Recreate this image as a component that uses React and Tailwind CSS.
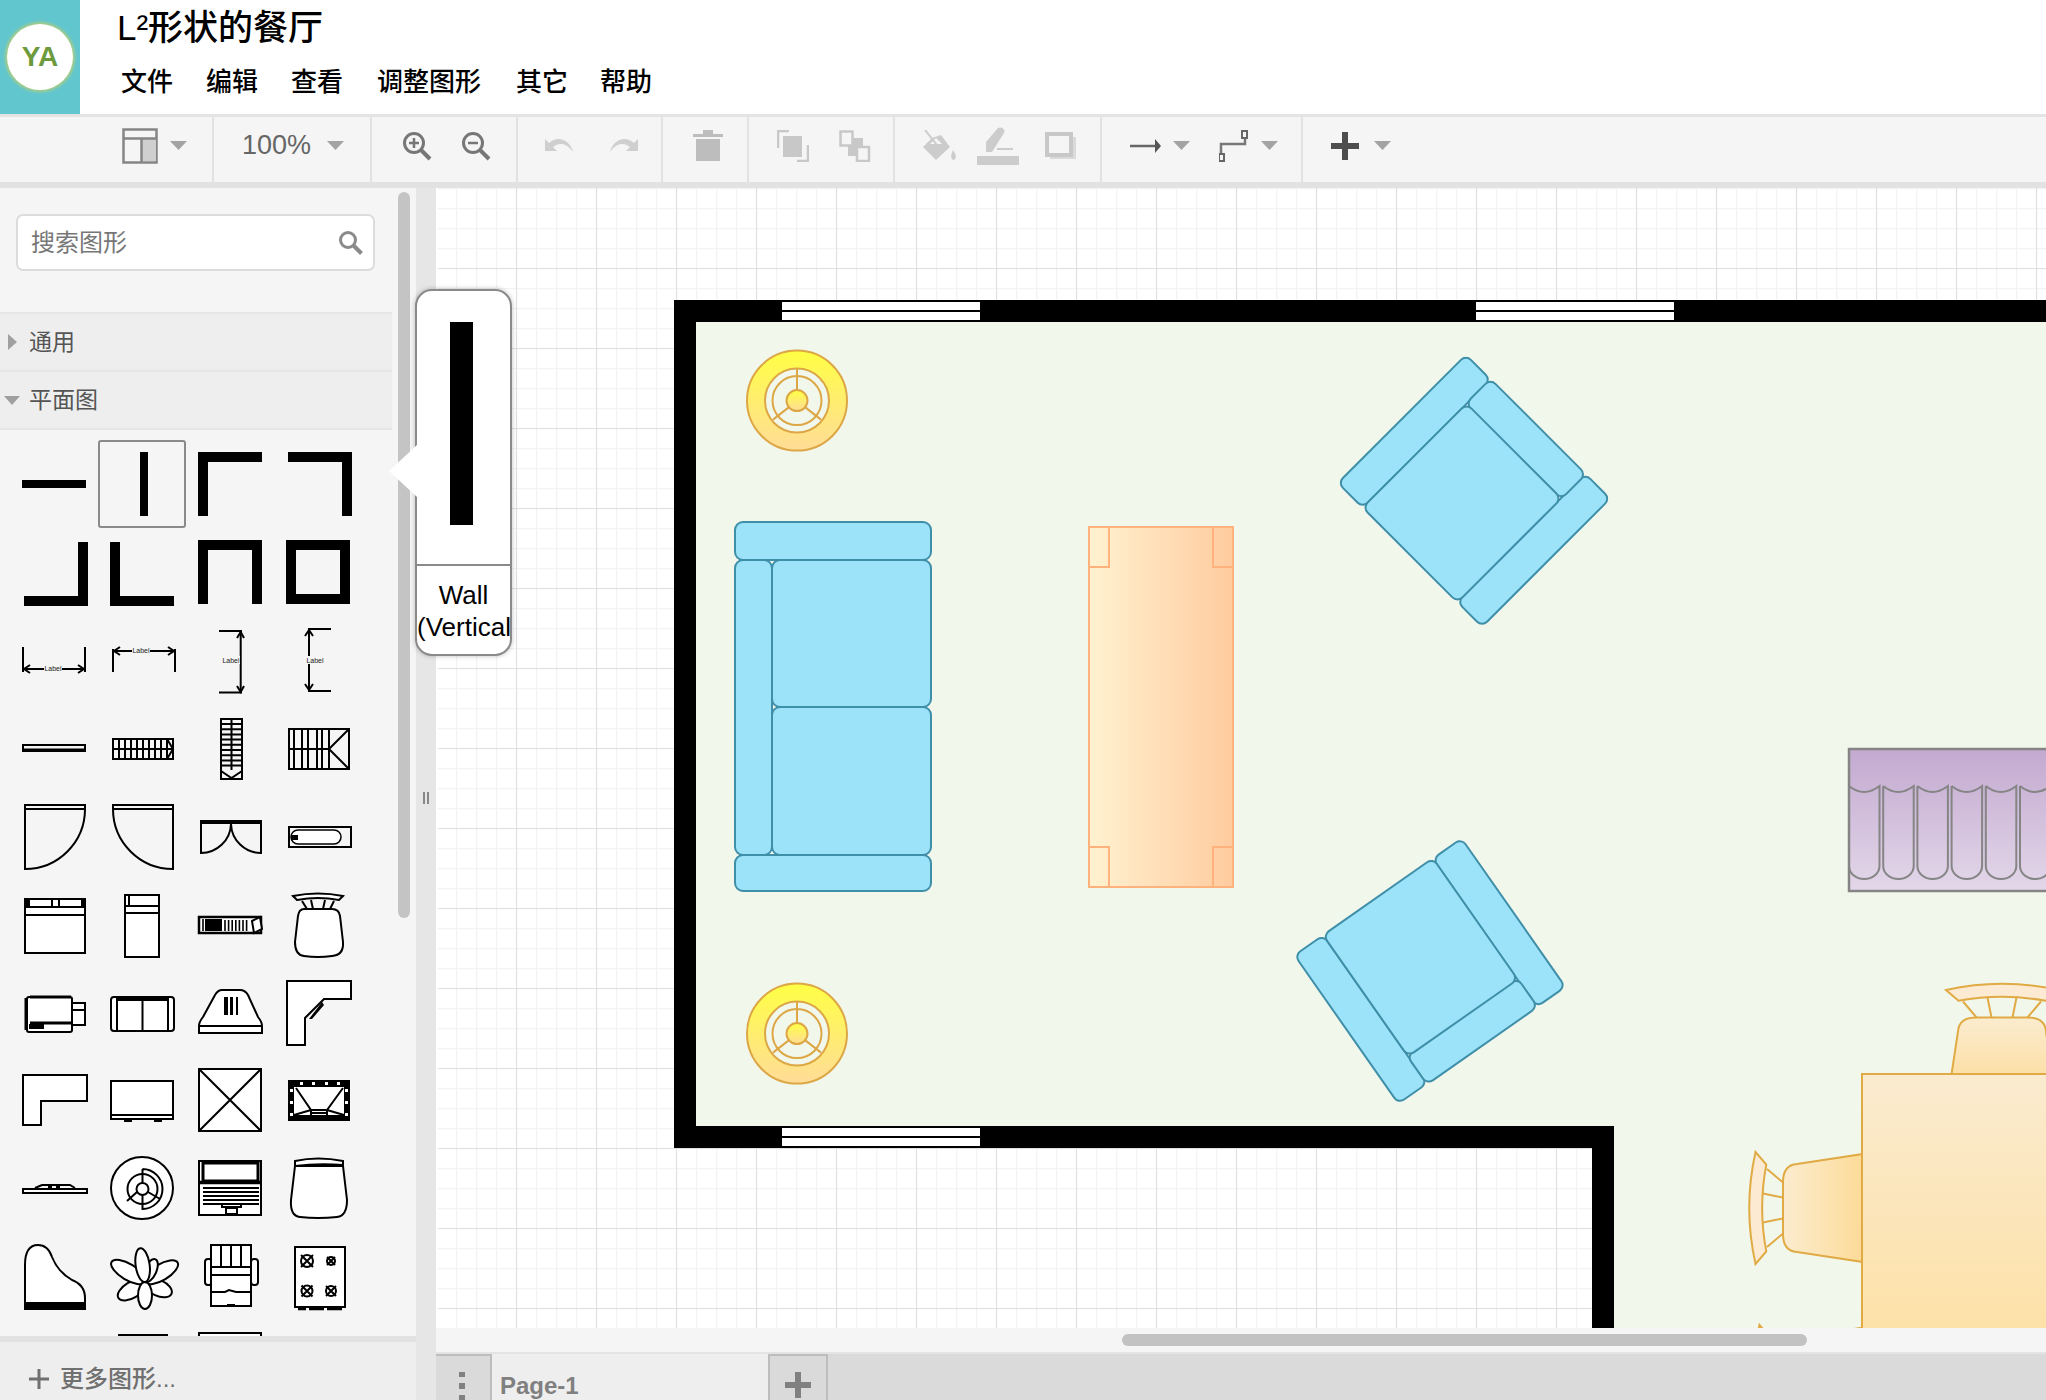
import { Fragment } from 'react';

const MENU = [
  ['文件', 'w-[85px]'],
  ['编辑', 'w-[85px]'],
  ['查看', 'w-[86px]'],
  ['调整图形', 'w-[139px]'],
  ['其它', 'w-[84px]'],
  ['帮助', 'w-[60px]'],
];

function Caret({ className = '' }) {
  return (
    <svg width="17" height="9" viewBox="0 0 17 9" className={`shrink-0 ${className}`}>
      <polygon points="0,0 17,0 8.5,9" fill="#a3a3a3" />
    </svg>
  );
}

function Ico({ w, h, className = '', children }) {
  return (
    <svg width={w} height={h} viewBox={`0 0 ${w} ${h}`} className={`shrink-0 ${className}`}>
      {children}
    </svg>
  );
}

function Toolbar() {
  const group = 'h-full flex items-center pb-[8px] border-r-2 border-[#e2e2e2] shrink-0';
  return (
    <div className="h-[65px] bg-[#f5f5f5] flex shrink-0">
      <div className={`${group} w-[214px]`}>
        <Ico w={36} h={36} className="ml-[122px]">
          <rect x="1.5" y="1.5" width="33" height="33" fill="#f5f5f5" stroke="#858585" strokeWidth="2.5" />
          <rect x="20" y="11" width="14" height="22" fill="#cfcfcf" />
          <path d="M2 10.5H34M19.5 10.5V34" stroke="#858585" strokeWidth="2.5" fill="none" />
        </Ico>
        <Caret className="ml-[12px]" />
      </div>
      <div className={`${group} w-[158px]`}>
        <span className="ml-[28px] text-[27px] leading-none text-[#666] w-[85px]">100%</span>
        <Caret />
      </div>
      <div className={`${group} w-[146px]`}>
        <Ico w={30} h={30} className="ml-[30px]">
          <circle cx="12" cy="12" r="9.5" fill="none" stroke="#777" strokeWidth="3" />
          <path d="M19 19L28 28" stroke="#777" strokeWidth="4" />
          <path d="M12 7V17M7 12H17" stroke="#777" strokeWidth="2.5" />
        </Ico>
        <Ico w={30} h={30} className="ml-[29px]">
          <circle cx="12" cy="12" r="9.5" fill="none" stroke="#777" strokeWidth="3" />
          <path d="M19 19L28 28" stroke="#777" strokeWidth="4" />
          <path d="M7 12H17" stroke="#777" strokeWidth="2.5" />
        </Ico>
      </div>
      <div className={`${group} w-[145px]`}>
        <Ico w={32} h={18} className="ml-[27px]">
          <path d="M0 2V14H12L8 10C14 5 22 6 28 15C26 5 14 -3 4 6Z" fill="#cfcfcf" />
        </Ico>
        <Ico w={32} h={18} className="ml-[29px]">
          <path d="M32 2V14H20L24 10C18 5 10 6 4 15C6 5 18 -3 28 6Z" fill="#cfcfcf" />
        </Ico>
      </div>
      <div className={`${group} w-[86px]`}>
        <Ico w={30} h={31} className="ml-[30px]">
          <path d="M0 4H10V0H20V4H30V7H0ZM3 9H27V31H3Z" fill="#bdbdbd" />
        </Ico>
      </div>
      <div className={`${group} w-[146px]`}>
        <Ico w={32} h={32} className="ml-[28px]">
          <path d="M12 1H1V18M20 31H31V15" fill="none" stroke="#c8c8c8" strokeWidth="2.5" />
          <rect x="6" y="6" width="19" height="21" fill="#c8c8c8" />
        </Ico>
        <Ico w={32} h={32} className="ml-[30px]">
          <rect x="9" y="8" width="15" height="18" fill="#c8c8c8" />
          <rect x="1.5" y="1.5" width="12" height="14" fill="#f5f5f5" stroke="#c8c8c8" strokeWidth="2.5" />
          <rect x="18" y="17" width="12" height="14" fill="#f5f5f5" stroke="#c8c8c8" strokeWidth="2.5" />
        </Ico>
      </div>
      <div className={`${group} w-[207px]`}>
        <Ico w={34} h={32} className="ml-[28px]">
          <path d="M9 8L18 5L27 17L13 30L0 17Z" fill="#cccccc" />
          <path d="M7 14L13 8L19 14Z" fill="#f5f5f5" />
          <path d="M2 0L14 15" stroke="#cccccc" strokeWidth="2" />
          <path d="M30 20C33 25 34 27 31 30C28 30 27 26 30 20Z" fill="#cccccc" />
        </Ico>
        <Ico w={42} h={38} className="ml-[20px]">
          <rect x="0" y="29" width="42" height="9" fill="#cccccc" />
          <path d="M9 25V15L21 1C25 -1 29 3 27 6L15 25Z" fill="#cccccc" />
          <path d="M20 22H36" stroke="#cccccc" strokeWidth="2" />
        </Ico>
        <Ico w={32} h={28} className="ml-[26px]">
          <rect x="5" y="5" width="26" height="22" fill="#dadada" />
          <rect x="2" y="2" width="24" height="21" fill="#f5f5f5" stroke="#c8c8c8" strokeWidth="4" />
        </Ico>
      </div>
      <div className={`${group} w-[201px]`}>
        <Ico w={31} h={16} className="ml-[28px]">
          <path d="M0 8H27" stroke="#666" strokeWidth="2.5" />
          <polygon points="25,1 31,8 25,15" fill="#555" />
        </Ico>
        <Caret className="ml-[12px]" />
        <Ico w={32} h={32} className="ml-[29px]">
          <path d="M2 28V14H26V5" fill="none" stroke="#777" strokeWidth="2.5" />
          <rect x="23" y="1" width="5" height="7" fill="#f5f5f5" stroke="#666" strokeWidth="2" />
          <rect x="0" y="24" width="5" height="7" fill="#f5f5f5" stroke="#666" strokeWidth="2" />
        </Ico>
        <Caret className="ml-[10px]" />
      </div>
      <div className="h-full flex items-center pb-[8px]">
        <Ico w={28} h={28} className="ml-[28px]">
          <path d="M11 0H17V11H28V17H17V28H11V17H0V11H11Z" fill="#4d4d4d" />
        </Ico>
        <Caret className="ml-[15px]" />
      </div>
    </div>
  );
}

const Bk = { fill: 'none', stroke: '#000', strokeWidth: 2 };
const Wh = { fill: '#fff', stroke: '#000', strokeWidth: 2 };

function Label({ x, y }) {
  return (
    <>
      <rect x={x - 9} y={y - 4} width="18" height="8" fill="#f5f5f5" />
      <text x={x} y={y + 2.5} textAnchor="middle" fontSize="7" fill="#222" fontFamily="Liberation Sans">Label</text>
    </>
  );
}

function ArrowHead({ d }) {
  return <path d={d} {...Bk} />;
}

const step = (from, to, by) => {
  const out = [];
  for (let v = from; v <= to; v += by) out.push(v);
  return out;
};

const PETALS = [[114, 29, 8], [-121, 31, 8], [-59, 39, 8], [59, 38, 8], [180, 27, 7], [25, 25, 6], [-8, 34, 7]];

// drawn in page pixels, the cell's viewBox does the offset
const SHAPES = [
  [
    <rect x="22" y="480" width="64" height="8" />,
    <rect x="140" y="452" width="8" height="64" />,
    <path d="M198 452H262V462H208V516H198Z" />,
    <path d="M288 452H352V516H342V462H288Z" />,
  ],
  [
    <path d="M78 542H88V606H24V596H78Z" />,
    <path d="M110 542H120V596H174V606H110Z" />,
    <path d="M198 604V540H262V604H252V550H208V604Z" />,
    <path fillRule="evenodd" d="M286 540H350V604H286ZM296 550V594H340V550Z" />,
  ],
  [
    <>
      <path d="M23 647V672M85 647V672M23 669H85" {...Bk} />
      <ArrowHead d="M30 665L24 669L30 673M78 665L84 669L78 673" />
      <Label x={53} y={668} />
    </>,
    <>
      <path d="M113 649V672M175 649V672M113 651H175" {...Bk} />
      <ArrowHead d="M120 647L114 651L120 655M168 647L174 651L168 655" />
      <Label x={141} y={650} />
    </>,
    <>
      <path d="M219 631H242M219 692.5H242M240.7 631V692" {...Bk} />
      <ArrowHead d="M237 638L240.7 632L244 638M237 686L240.7 692L244 686" />
      <Label x={231} y={660} />
    </>,
    <>
      <path d="M308 629H331M308 691H331M309 629V691" {...Bk} />
      <ArrowHead d="M305 636L309 630L313 636M305 684L309 690L313 684" />
      <Label x={315} y={660} />
    </>,
  ],
  [
    <>
      <rect x="22" y="744" width="64" height="8" />
      <rect x="24" y="746" width="60" height="2.5" fill="#f5f5f5" />
    </>,
    <>
      <rect x="113" y="739" width="60" height="20" {...Bk} />
      <path d={`M113 749H173 ${step(119, 167, 6).map(x => `M${x} 739V759`).join(' ')} M167 739L173 749L167 759`} {...Bk} />
    </>,
    <>
      <rect x="221" y="719" width="21" height="60" {...Bk} />
      <path d={`M231.5 719V770 ${step(724, 770, 5.2).map(y => `M221 ${y}H242`).join(' ')} M221 771L231.5 778L242 771`} {...Bk} />
    </>,
    <>
      <rect x="289" y="729" width="60" height="40" {...Bk} />
      <path d="M289 749H329M294 729V769M302 729V769M308 729V769M317 729V769M322 729V769M329 729V769M329 749L349 729M329 749L349 769" {...Bk} />
    </>,
  ],
  [
    <>
      <path d="M25 805H85V809A60 60 0 0 1 25 869V805ZM25 809H85" {...Bk} />
    </>,
    <>
      <path d="M113 805H173V869A60 60 0 0 1 113 809ZM113 809H173" {...Bk} />
    </>,
    <>
      <rect x="200" y="820" width="62" height="4" />
      <path d="M201 824V853A30 30 0 0 0 231 824A30 30 0 0 0 261 853V824" {...Bk} />
    </>,
    <>
      <rect x="289" y="827" width="62" height="20" {...Bk} />
      <rect x="291" y="830" width="50" height="14" rx="7" fill="#fff" stroke="#000" strokeWidth="1.5" />
      <rect x="291" y="835" width="7" height="5" />
    </>,
  ],
  [
    <>
      <rect x="25" y="899" width="60" height="54" {...Wh} />
      <path d="M29 899V907M52 899V907M59 899V907M82 899V907M25 907H85M25 915H85" {...Bk} />
      <rect x="25" y="899" width="4" height="8" />
      <rect x="82" y="899" width="3" height="8" />
    </>,
    <>
      <rect x="125" y="895" width="34" height="62" {...Wh} />
      <path d="M125 906H159M125 913H159M129 895V906" {...Bk} />
    </>,
    <>
      <rect x="199" y="917" width="62" height="16" fill="#fff" stroke="#000" strokeWidth="2.5" />
      <rect x="205" y="919" width="17" height="12" />
      <path d={`M203 919V931 ${step(225, 250, 3.6).map(x => `M${x} 920V931`).join(' ')}`} stroke="#000" strokeWidth="1.6" fill="none" />
      <path d="M252 921L260 917L262 929L254 933Z" {...Wh} />
    </>,
    <>
      <path d="M302 901L307 909M311 900L313 909M325 900L323 909M334 901L330 909" {...Bk} />
      <path d="M293 896Q318 891 343 896L339 900Q318 896 297 900Z" {...Wh} />
      <path d="M304 909H332Q339 909 340 916L343 942Q344 955 332 956Q318 958 304 956Q295 955 295 942L298 916Q299 909 304 909Z" {...Wh} />
    </>,
  ],
  [
    <>
      <rect x="72" y="1003" width="13" height="22" {...Wh} />
      <path d="M72 1010H85" {...Bk} />
      <rect x="27" y="997" width="45" height="35" rx="2" {...Wh} />
      <path d="M30 997H71M26 998V1030M30 1023H71" stroke="#000" strokeWidth="3" fill="none" />
      <rect x="29" y="1024" width="15" height="5" />
    </>,
    <>
      <rect x="111" y="997" width="63" height="34" rx="3" {...Wh} />
      <path d="M117 997V1031M168 997V1031M142.5 1000V1031" {...Bk} />
      <rect x="117" y="997" width="51" height="4" />
    </>,
    <>
      <path d="M203 1017L215 995Q218 990 222 990H240Q245 990 248 995L258 1017Q262 1022 262 1026V1033H199V1026Q199 1022 203 1017Z" {...Wh} />
      <path d="M199 1026H262" {...Bk} />
      <path d="M224 997H228V1015H224ZM230 997H233V1015H230ZM236 997H238V1015H236Z" />
    </>,
    <>
      <path d="M287 981H351V999H324L305 1018V1045H287Z" {...Wh} />
      <path d="M309 1019L322 1002L324 1005L312 1019Z" />
    </>,
  ],
  [
    <path d="M23 1075H87V1101H41V1125H23Z" {...Wh} />,
    <>
      <rect x="125" y="1116" width="6" height="5" {...Wh} />
      <rect x="155" y="1116" width="6" height="5" {...Wh} />
      <rect x="111" y="1081" width="62" height="38" {...Wh} />
      <path d="M111 1115H173" {...Bk} />
    </>,
    <>
      <rect x="199" y="1069" width="62" height="62" {...Wh} />
      <path d="M199 1069L261 1131M261 1069L199 1131" {...Bk} />
    </>,
    <>
      <rect x="288" y="1080" width="62" height="41" />
      <rect x="294" y="1087" width="50" height="28" fill="#fff" />
      {[300, 312, 325, 337].map(x => <rect key={x} x={x} y="1082" width="3" height="3" fill="#fff" />)}
      {[1089, 1101, 1113].map(y => <Fragment key={y}><rect x="290" y={y} width="3" height="3" fill="#fff" /><rect x="345" y={y} width="3" height="3" fill="#fff" /></Fragment>)}
      <path d="M296 1088L311 1110H327L343 1088M311 1110V1115M327 1110V1115M311 1113H327M294 1115L311 1110M344 1115L327 1110" {...Bk} />
    </>,
  ],
  [
    <>
      <rect x="23" y="1189" width="64" height="4" {...Wh} />
      <path d="M35 1188L42 1185H70L75 1188" {...Bk} />
      <path d="M48 1186H52V1189H48ZM56 1186H60V1189H56Z" />
    </>,
    <>
      <circle cx="142" cy="1188" r="31" {...Wh} />
      <circle cx="142.5" cy="1189" r="15" {...Bk} />
      <circle cx="142.5" cy="1189" r="6" {...Bk} />
      <path d="M142.5 1169A20 20 0 0 1 142.5 1209V1195M142.5 1183V1169M148 1192L160 1199M137 1192L127 1201" {...Bk} />
    </>,
    <>
      <rect x="199" y="1161" width="62" height="54" {...Wh} />
      <rect x="203" y="1163" width="55" height="18" fill="#fff" stroke="#000" strokeWidth="3" />
      <path d="M200 1182.5H262" stroke="#000" strokeWidth="3.5" />
      <path d="M203 1188H259M203 1192H259M203 1196H259M203 1200H259M203 1204H259M222 1204V1207H241V1204" {...Bk} />
      <rect x="226" y="1208" width="11" height="6" {...Wh} />
    </>,
    <>
      <path d="M295 1166L291 1200Q290 1216 300 1217Q318 1219 337 1217Q347 1216 347 1200L343 1166Z" {...Wh} />
      <path d="M295 1161Q318 1156 343 1161V1165Q318 1163 295 1166Z" {...Wh} />
    </>,
  ],
  [
    <>
      <path d="M25 1265Q25 1245 38 1245Q48 1245 52 1257Q58 1272 72 1280Q85 1285 85 1298V1309H25Z" {...Wh} />
      <rect x="25" y="1302" width="60" height="8" />
    </>,
    <>
      {PETALS.map(([a, len, rx]) => (
        <ellipse key={a} cx="0" cy={-len / 2} rx={rx} ry={len / 2} transform={`translate(145 1282) rotate(${a})`} {...Wh} />
      ))}
    </>,
    <>
      <rect x="205" y="1259" width="7" height="26" rx="3" {...Wh} />
      <rect x="251" y="1259" width="7" height="26" rx="3" {...Wh} />
      <rect x="211" y="1245" width="40" height="61" {...Wh} />
      <path d="M221 1245V1267M231 1245V1267M241 1245V1267M211 1267H251M211 1275H251M211 1292L225 1292L229 1290L236 1292H251" {...Bk} />
      <rect x="227" y="1304" width="8" height="3" />
    </>,
    <>
      <rect x="295" y="1247" width="50" height="60" {...Wh} />
      <path d="M298 1309H306M309 1309H324M327 1309H342" stroke="#000" strokeWidth="2.5" />
      {[[307, 1261, 6], [331, 1261, 4], [307, 1291, 5.5], [331, 1291, 5]].map(([x, y, r]) => (
        <Fragment key={`${x}-${y}`}>
          <circle cx={x} cy={y} r={r} {...Bk} />
          <path d={`M${x - r} ${y - r}L${x + r} ${y + r}M${x + r} ${y - r}L${x - r} ${y + r}`} {...Bk} />
        </Fragment>
      ))}
    </>,
  ],
  [
    null,
    <path d="M119 1340V1335H167V1340" {...Bk} />,
    <rect x="199" y="1333" width="62" height="12" {...Wh} />,
    null,
  ],
];

function Palette() {
  return (
    <div className="grid grid-cols-[repeat(4,88px)] auto-rows-[88px] pl-[10px] pt-[10px] shrink-0">
      {SHAPES.map((row, r) =>
        row.map((shape, c) => (
          <div key={`${r}-${c}`} className={r === 0 && c === 1 ? 'rounded-[3px] outline-2 -outline-offset-2 outline-[#8a8a8a]' : ''}>
            <svg width="88" height="88" viewBox={`${10 + 88 * c} ${440 + 88 * r} 88 88`} className="block">
              {shape}
            </svg>
          </div>
        ))
      )}
    </div>
  );
}

function Sidebar() {
  return (
    <div className="w-[416px] flex flex-col shrink-0 bg-[#f5f5f5]">
      <div className="h-[1148px] flex overflow-hidden shrink-0">
        <div className="w-[392px] flex flex-col shrink-0">
          <div className="mt-[26px] ml-[16px] w-[359px] h-[57px] shrink-0 rounded-[7px] border-2 border-[#dcdcdc] bg-white flex items-center justify-between pl-[13px] pr-[10px]">
            <span className="text-[24px] text-[#777] leading-none">搜索图形</span>
            <svg width="25" height="25" viewBox="0 0 25 25">
              <circle cx="10" cy="10" r="7.5" fill="none" stroke="#8a8a8a" strokeWidth="3" />
              <path d="M15.5 15.5L23.5 23.5" stroke="#8a8a8a" strokeWidth="4" />
            </svg>
          </div>
          <div className="mt-[41px] h-[58px] shrink-0 bg-[#eeeeee] border-t-2 border-[#e6e6e6] flex items-center">
            <svg width="9" height="16" viewBox="0 0 9 16" className="ml-[8px]">
              <polygon points="0,0 9,8 0,16" fill="#a0a0a0" />
            </svg>
            <span className="ml-[12px] text-[23px] leading-none text-[#555]">通用</span>
          </div>
          <div className="h-[60px] shrink-0 bg-[#eeeeee] border-y-2 border-[#e6e6e6] flex items-center">
            <svg width="16" height="9" viewBox="0 0 16 9" className="ml-[4px]">
              <polygon points="0,0 16,0 8,9" fill="#a0a0a0" />
            </svg>
            <span className="ml-[9px] text-[23px] leading-none text-[#555]">平面图</span>
          </div>
          <Palette />
        </div>
        <div className="flex-1 pl-[6px] pt-[4px]">
          <div className="w-[12px] h-[726px] rounded-full bg-[#c4c4c4]" />
        </div>
      </div>
      <div className="flex-1 border-t-[6px] border-[#e2e2e2] bg-[#eeeeee] flex items-center pt-[16px]">
        <svg width="20" height="20" viewBox="0 0 20 20" className="ml-[29px]">
          <path d="M10 0V20M0 10H20" stroke="#707070" strokeWidth="3" />
        </svg>
        <span className="ml-[11px] text-[24px] leading-none font-medium text-[#707070]">更多图形...</span>
      </div>
    </div>
  );
}

function Lamp({ cx, cy }) {
  const s = '#dca744';
  return (
    <g transform={`translate(${cx} ${cy})`} fill="none" stroke={s} strokeWidth="2">
      <circle r="50" fill="url(#lamp)" />
      <circle r="32" fill="#f2f7ec" />
      <circle r="24.5" />
      <circle r="10.5" fill="url(#lamp)" />
      <path d="M0 -10.5V-32M-8 6.5L-24 19M8 6.5L24 19" />
    </g>
  );
}

function Cushion({ cx, cy, w, h, a }) {
  return <rect x={-w / 2} y={-h / 2} width={w} height={h} rx="7" transform={`translate(${cx} ${cy}) rotate(${a})`} fill="#9ce2f9" stroke="#3f8fa9" strokeWidth="2" />;
}

function DiningChair({ x, y, a }) {
  return (
    <g transform={`translate(${x} ${y}) rotate(${a})`} stroke="#e0aa44" strokeWidth="2">
      <path d="M-26 0H26Q43 0 44 14L54 80H-54L-44 14Q-43 0 -26 0Z" fill="url(#seat)" />
      <path d="M-39 -16L-25.5 0M-14.5 -20L-10.5 0M14.5 -20L10.5 0M39 -16L25.5 0" fill="none" />
      <path d="M-56 -27.5Q0 -40 56 -27.5L43.5 -16.7Q0 -25 -43.5 -16.7Z" fill="#fcebd2" />
    </g>
  );
}

function FloorPlan() {
  const pillars = [0, 1, 2, 3, 4, 5];
  return (
    <svg width="1610" height="1140" viewBox="436 188 1610 1140" className="block shrink-0">
      <defs>
        <pattern id="minor" x="436" y="188" width="20" height="20" patternUnits="userSpaceOnUse">
          <path d="M0.5 0V20M0 0.5H20" stroke="#f3f3f3" strokeWidth="1.5" fill="none" />
        </pattern>
        <linearGradient id="lamp" x1="0" y1="0" x2="0" y2="1">
          <stop offset="0" stopColor="#ffff44" />
          <stop offset="1" stopColor="#ffdc98" />
        </linearGradient>
        <linearGradient id="tbl" x1="0" y1="0" x2="1" y2="0">
          <stop offset="0" stopColor="#fff2d0" />
          <stop offset="1" stopColor="#ffcb9f" />
        </linearGradient>
        <linearGradient id="cur" x1="0" y1="0" x2="0" y2="1">
          <stop offset="0" stopColor="#c3a9d0" />
          <stop offset="1" stopColor="#e3d7e9" />
        </linearGradient>
        <linearGradient id="seat" x1="0" y1="0" x2="0" y2="1">
          <stop offset="0" stopColor="#fbeccf" />
          <stop offset="1" stopColor="#fddb98" />
        </linearGradient>
        <linearGradient id="dining" x1="0" y1="0" x2="0" y2="1">
          <stop offset="0" stopColor="#faebcf" />
          <stop offset="1" stopColor="#fde0a4" />
        </linearGradient>
      </defs>
      <rect x="436" y="188" width="1610" height="1140" fill="#fff" />
      <rect x="438" y="188" width="1608" height="1140" fill="url(#minor)" />
      <path d={`${step(516, 2046, 80).map(x => `M${x + 0.5} 188V1328`).join(' ')} ${step(268, 1328, 80).map(y => `M438 ${y + 0.5}H2046`).join(' ')}`} stroke="#e0e0e0" strokeWidth="1" fill="none" />

      {/* room */}
      <path d="M696 322H2046V1328H1614V1126H696Z" fill="#f2f7ec" />
      <path d="M674 300H2046V322H696V1126H1614V1328H1592V1148H674Z" fill="#000" />
      {[[782, 302], [1476, 302], [782, 1128]].map(([x, y]) => (
        <Fragment key={`${x}-${y}`}>
          <rect x={x} y={y} width="198" height="8" fill="#fff" />
          <rect x={x} y={y + 10} width="198" height="8" fill="#fff" />
        </Fragment>
      ))}

      <Lamp cx={797} cy={400.6} />
      <Lamp cx={797} cy={1033.6} />

      {/* sofa */}
      <g fill="#9ce2f9" stroke="#3f8fa9" strokeWidth="2">
        <rect x="735" y="560" width="37" height="295" rx="8" />
        <rect x="772" y="560" width="159" height="147" rx="8" />
        <rect x="772" y="707" width="159" height="148" rx="8" />
        <rect x="735" y="522" width="196" height="38" rx="8" />
        <rect x="735" y="855" width="196" height="36" rx="8" />
      </g>

      {/* coffee table */}
      <g fill="none" stroke="#ffb27c" strokeWidth="2">
        <rect x="1089" y="527" width="144" height="360" fill="url(#tbl)" />
        <path d="M1089 567H1109V527M1233 567H1213V527M1089 847H1109V887M1233 847H1213V887" />
      </g>

      <Cushion cx={1414.3} cy={431.3} w={181} h={35} a={-45} />
      <Cushion cx={1533.7} cy={550.3} w={181} h={35} a={-45} />
      <Cushion cx={1525.8} cy={439} w={135} h={35} a={45} />
      <Cushion cx={1462} cy={503} w={147} h={134} a={-45} />

      <Cushion cx={1499.1} cy={922.7} w={181} h={35} a={55} />
      <Cushion cx={1360.8} cy={1019.4} w={181} h={35} a={55} />
      <Cushion cx={1472.3} cy={1031.3} w={135} h={35} a={-35} />
      <Cushion cx={1420.4} cy={957.3} w={148} h={134} a={55} />

      {/* curtain */}
      <rect x="1849" y="749" width="230" height="142" fill="url(#cur)" stroke="#858585" strokeWidth="2.5" />
      <g fill="none" stroke="#858585" strokeWidth="2">
        {pillars.map(i => {
          const x = 1849 + i * 34.2;
          return (
            <path key={i} d={`M${x} 786Q${x + 15} 798 ${x + 30.5} 786V866A15.25 13 0 0 1 ${x} 866${i === 0 ? '' : 'V786'}`} />
          );
        })}
      </g>

      {/* dining set */}
      <DiningChair x={2002} y={1017.5} a={0} />
      <DiningChair x={1783} y={1208} a={-90} />
      <DiningChair x={1787} y={1381} a={-90} />
      <rect x="1862" y="1074" width="220" height="280" fill="url(#dining)" stroke="#e0aa44" strokeWidth="2" />
    </svg>
  );
}

function Tooltip() {
  return (
    <div className="absolute left-[389px] top-[289px]">
      <div className="absolute left-[26px] top-0 w-[97px] h-[367px] rounded-[17px] border-2 border-[#8a8a8a] bg-white shadow-[0_0_5px_rgba(0,0,0,0.25)] overflow-hidden">
        <div className="h-[275px] border-b-2 border-[#8a8a8a] pt-[31px] pl-[33px]">
          <div className="w-[23px] h-[203px] bg-black" />
        </div>
        <div className="text-[26px] leading-[32px] text-black whitespace-nowrap text-center pt-[13px]">
          <div>Wall</div>
          <div>(Vertical)</div>
        </div>
      </div>
      <svg width="30" height="52" viewBox="0 0 30 52" className="absolute left-0 top-[156px]">
        <polygon points="0,26 28,0 30,0 30,52 28,52" fill="#fff" />
      </svg>
    </div>
  );
}

export default function App() {
  return (
    <div className="relative w-[2046px] h-[1400px] overflow-hidden bg-white font-['Liberation_Sans','Noto_Sans_CJK_SC',sans-serif]">
      {/* header */}
      <div className="h-[114px] flex">
        <div className="w-[80px] bg-[#62c6cf] flex items-center justify-center shrink-0">
          <div className="w-[66px] h-[66px] rounded-full bg-white shadow-[0_0_3px_2px_#a8cd84] flex items-center justify-center text-[#6d9a3c] font-bold text-[28px] leading-none">
            YA
          </div>
        </div>
        <div className="pl-[37px] flex flex-col">
          <div className="h-[54px] flex items-center text-[35px] leading-none font-medium text-black">L²形状的餐厅</div>
          <div className="flex pl-[4px] mt-[3px]">
            {MENU.map(([label, width]) => (
              <span key={label} className={`${width} h-[50px] flex items-center text-[26px] leading-none font-medium text-black`}>
                {label}
              </span>
            ))}
          </div>
        </div>
      </div>
      <div className="h-[3px] bg-[#e4e4e4]" />
      <Toolbar />
      <div className="h-[6px] bg-[#e2e2e2]" />

      {/* main */}
      <div className="h-[1212px] flex">
        <Sidebar />
        <div className="w-[20px] bg-[#e6e6e6] shrink-0 relative flex justify-center pt-[604px]">
          <span className="w-[6px] h-[12px] border-x-2 border-[#888]" />
        </div>
        <div className="flex-1 flex flex-col min-w-0">
          <FloorPlan />
          <div className="h-[24px] bg-[#f5f5f5] pt-[6px] shrink-0">
            <div className="ml-[686px] w-[685px] h-[12px] rounded-full bg-[#c2c2c2]" />
          </div>
          <div className="h-[2px] bg-[#e4e4e4] shrink-0" />
          <div className="flex-1 bg-[#dadada] flex -ml-[4px] overflow-hidden">
            <div className="w-[60px] border-x-2 border-t-2 border-[#bdbdbd] flex flex-col items-center gap-[6px] pt-[16px] shrink-0">
              <span className="w-[6px] h-[6px] bg-[#808080]" />
              <span className="w-[6px] h-[6px] bg-[#808080]" />
              <span className="w-[6px] h-[6px] bg-[#808080]" />
            </div>
            <div className="w-[276px] bg-[#eeeeee] pl-[8px] pt-[17px] text-[24px] font-bold leading-[30px] text-[#808080] shrink-0">Page-1</div>
            <div className="w-[60px] border-x-2 border-t-2 border-[#bdbdbd] flex justify-center pt-[16px] shrink-0">
              <svg width="26" height="26" viewBox="0 0 26 26">
                <path d="M10 0H16V10H26V16H16V26H10V16H0V10H10Z" fill="#808080" />
              </svg>
            </div>
          </div>
        </div>
      </div>

      <Tooltip />
    </div>
  );
}
